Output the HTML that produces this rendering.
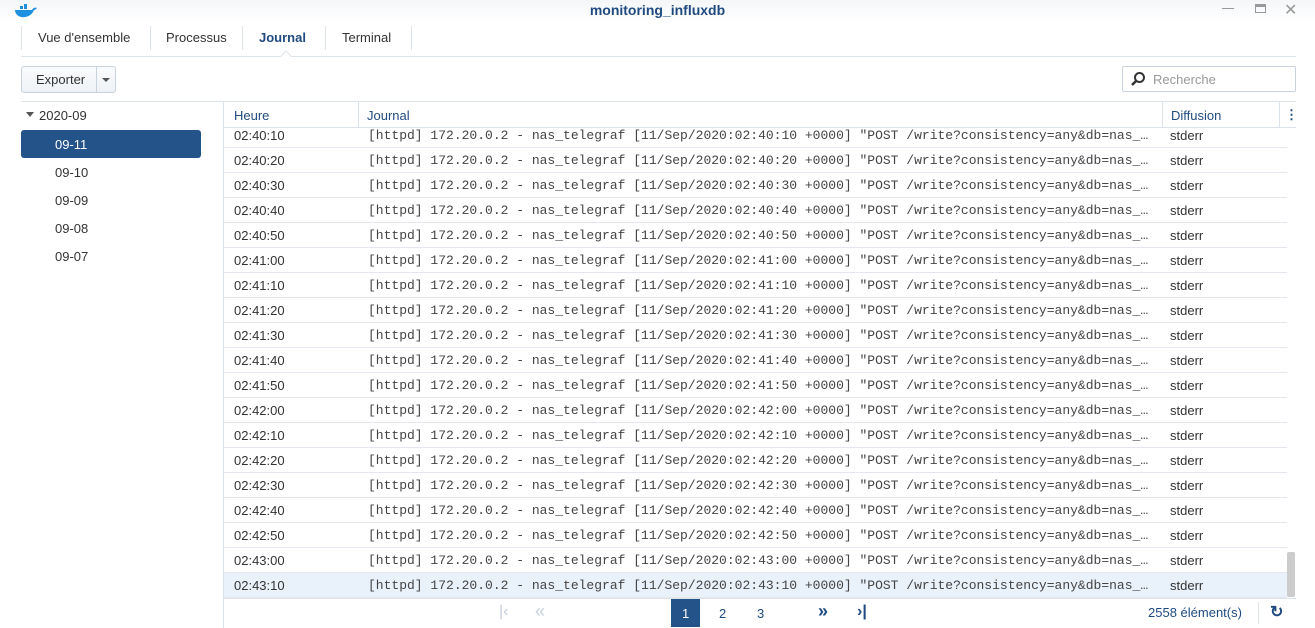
<!DOCTYPE html><html><head><style>
*{margin:0;padding:0;box-sizing:border-box}
body{width:1315px;height:628px;overflow:hidden;background:#fff;font-family:"Liberation Sans",sans-serif;font-size:13px;color:#333;position:relative}
.abs{position:absolute}
.title{left:0;top:0;width:1315px;height:22px;background:linear-gradient(#f4f6f8,#fff)}
.title .t{left:0;width:1315px;text-align:center;top:2px;font-weight:bold;font-size:14px;color:#1f4a80}
.tab{top:30px;font-size:13px;color:#333}
.sep{width:1px;height:24px;background:#dde3ea;top:26px}
.r{position:absolute;left:0;width:1063px;height:25px;border-bottom:1px solid #e4e8ee}
.r span{position:absolute;top:5px}
.r .h{left:10px}
.r .m{font-family:"Liberation Mono",monospace;font-size:13px;color:#444;left:144px;top:5px;white-space:pre}
.r .d{left:946px}
.hdr{color:#1f4a80}
.ld{left:55px;color:#333}
</style></head><body>
<div class="abs title"><div class="abs t">monitoring_influxdb</div></div>
<svg class="abs" style="left:14px;top:4px" width="24" height="14" viewBox="0 0 24 14"><path d="M1 6h17c1-2 3-3 5-2-1 1-2 2-3 2-2 5-7 8-13 7C3 12 1 9 1 6z" fill="#1e90e0"/><rect x="6" y="2" width="3" height="3" fill="#1e90e0"/><rect x="10" y="2" width="3" height="3" fill="#1e90e0"/><rect x="10" y="0" width="3" height="2" fill="#1e90e0"/></svg>
<div class="abs" style="left:1222px;top:8px;width:12px;height:1px;background:#999"></div>
<div class="abs" style="left:1255px;top:4px;width:11px;height:9px;border:1px solid #999;border-top-width:3px"></div>
<div class="abs" style="left:1284px;top:0px;color:#999;font-size:16px">✕</div>
<div class="abs" style="left:21px;top:56px;width:1275px;height:1px;background:#dde3ea"></div>
<div class="abs" style="left:21px;top:26px;width:1px;height:24px;background:#dde3ea"></div>
<div class="abs tab" style="left:38px">Vue d'ensemble</div>
<div class="abs sep" style="left:150px"></div>
<div class="abs tab" style="left:166px">Processus</div>
<div class="abs sep" style="left:242px"></div>
<div class="abs tab" style="left:259px;font-weight:bold;color:#1f4a80">Journal</div>
<div class="abs sep" style="left:325px"></div>
<div class="abs tab" style="left:342px">Terminal</div>
<div class="abs sep" style="left:411px"></div>
<div class="abs" style="left:282px;top:52px;width:8px;height:8px;background:#fff;border-left:1px solid #dde3ea;border-top:1px solid #dde3ea;transform:rotate(45deg)"></div>
<div class="abs" style="left:21px;top:66px;width:95px;height:27px;border:1px solid #c9d3de;border-radius:3px;background:linear-gradient(#fafbfc,#eef2f6)"></div>
<div class="abs" style="left:36px;top:72px">Exporter</div>
<div class="abs" style="left:96px;top:66px;width:1px;height:27px;background:#c9d3de"></div>
<div class="abs" style="left:102px;top:78px;border-left:4px solid transparent;border-right:4px solid transparent;border-top:4px solid #555"></div>
<div class="abs" style="left:1122px;top:66px;width:174px;height:26px;border:1px solid #c9d3de;border-radius:2px"></div>
<svg class="abs" style="left:1130px;top:71px" width="16" height="16" viewBox="0 0 16 16"><circle cx="9.5" cy="6.5" r="4.5" fill="none" stroke="#333" stroke-width="2"/><path d="M6 10l-4 4" stroke="#333" stroke-width="2.5"/></svg>
<div class="abs" style="left:1153px;top:72px;color:#999">Recherche</div>
<div class="abs" style="left:21px;top:101px;width:1275px;height:1px;background:#dde3ea"></div>
<div class="abs" style="left:26px;top:112px;border-left:4px solid transparent;border-right:4px solid transparent;border-top:5px solid #555"></div>
<div class="abs" style="left:39px;top:108px">2020-09</div>
<div class="abs" style="left:21px;top:130px;width:180px;height:28px;background:#24538a;border-radius:3px"></div>
<div class="abs" style="left:55px;top:137px;color:#fff">09-11</div>
<div class="abs ld" style="top:165px">09-10</div>
<div class="abs ld" style="top:193px">09-09</div>
<div class="abs ld" style="top:221px">09-08</div>
<div class="abs ld" style="top:249px">09-07</div>
<div class="abs" style="left:223px;top:102px;width:1px;height:526px;background:#dde3ea"></div>
<div class="abs" style="left:224px;top:128px;width:1063px;height:470px;overflow:hidden">
<div class="r" style="top:-5px"><span class="h">02:40:10</span><span class="m">[httpd] 172.20.0.2 - nas_telegraf [11/Sep/2020:02:40:10 +0000] "POST /write?consistency=any&amp;db=nas_…</span><span class="d">stderr</span></div>
<div class="r" style="top:20px"><span class="h">02:40:20</span><span class="m">[httpd] 172.20.0.2 - nas_telegraf [11/Sep/2020:02:40:20 +0000] "POST /write?consistency=any&amp;db=nas_…</span><span class="d">stderr</span></div>
<div class="r" style="top:45px"><span class="h">02:40:30</span><span class="m">[httpd] 172.20.0.2 - nas_telegraf [11/Sep/2020:02:40:30 +0000] "POST /write?consistency=any&amp;db=nas_…</span><span class="d">stderr</span></div>
<div class="r" style="top:70px"><span class="h">02:40:40</span><span class="m">[httpd] 172.20.0.2 - nas_telegraf [11/Sep/2020:02:40:40 +0000] "POST /write?consistency=any&amp;db=nas_…</span><span class="d">stderr</span></div>
<div class="r" style="top:95px"><span class="h">02:40:50</span><span class="m">[httpd] 172.20.0.2 - nas_telegraf [11/Sep/2020:02:40:50 +0000] "POST /write?consistency=any&amp;db=nas_…</span><span class="d">stderr</span></div>
<div class="r" style="top:120px"><span class="h">02:41:00</span><span class="m">[httpd] 172.20.0.2 - nas_telegraf [11/Sep/2020:02:41:00 +0000] "POST /write?consistency=any&amp;db=nas_…</span><span class="d">stderr</span></div>
<div class="r" style="top:145px"><span class="h">02:41:10</span><span class="m">[httpd] 172.20.0.2 - nas_telegraf [11/Sep/2020:02:41:10 +0000] "POST /write?consistency=any&amp;db=nas_…</span><span class="d">stderr</span></div>
<div class="r" style="top:170px"><span class="h">02:41:20</span><span class="m">[httpd] 172.20.0.2 - nas_telegraf [11/Sep/2020:02:41:20 +0000] "POST /write?consistency=any&amp;db=nas_…</span><span class="d">stderr</span></div>
<div class="r" style="top:195px"><span class="h">02:41:30</span><span class="m">[httpd] 172.20.0.2 - nas_telegraf [11/Sep/2020:02:41:30 +0000] "POST /write?consistency=any&amp;db=nas_…</span><span class="d">stderr</span></div>
<div class="r" style="top:220px"><span class="h">02:41:40</span><span class="m">[httpd] 172.20.0.2 - nas_telegraf [11/Sep/2020:02:41:40 +0000] "POST /write?consistency=any&amp;db=nas_…</span><span class="d">stderr</span></div>
<div class="r" style="top:245px"><span class="h">02:41:50</span><span class="m">[httpd] 172.20.0.2 - nas_telegraf [11/Sep/2020:02:41:50 +0000] "POST /write?consistency=any&amp;db=nas_…</span><span class="d">stderr</span></div>
<div class="r" style="top:270px"><span class="h">02:42:00</span><span class="m">[httpd] 172.20.0.2 - nas_telegraf [11/Sep/2020:02:42:00 +0000] "POST /write?consistency=any&amp;db=nas_…</span><span class="d">stderr</span></div>
<div class="r" style="top:295px"><span class="h">02:42:10</span><span class="m">[httpd] 172.20.0.2 - nas_telegraf [11/Sep/2020:02:42:10 +0000] "POST /write?consistency=any&amp;db=nas_…</span><span class="d">stderr</span></div>
<div class="r" style="top:320px"><span class="h">02:42:20</span><span class="m">[httpd] 172.20.0.2 - nas_telegraf [11/Sep/2020:02:42:20 +0000] "POST /write?consistency=any&amp;db=nas_…</span><span class="d">stderr</span></div>
<div class="r" style="top:345px"><span class="h">02:42:30</span><span class="m">[httpd] 172.20.0.2 - nas_telegraf [11/Sep/2020:02:42:30 +0000] "POST /write?consistency=any&amp;db=nas_…</span><span class="d">stderr</span></div>
<div class="r" style="top:370px"><span class="h">02:42:40</span><span class="m">[httpd] 172.20.0.2 - nas_telegraf [11/Sep/2020:02:42:40 +0000] "POST /write?consistency=any&amp;db=nas_…</span><span class="d">stderr</span></div>
<div class="r" style="top:395px"><span class="h">02:42:50</span><span class="m">[httpd] 172.20.0.2 - nas_telegraf [11/Sep/2020:02:42:50 +0000] "POST /write?consistency=any&amp;db=nas_…</span><span class="d">stderr</span></div>
<div class="r" style="top:420px"><span class="h">02:43:00</span><span class="m">[httpd] 172.20.0.2 - nas_telegraf [11/Sep/2020:02:43:00 +0000] "POST /write?consistency=any&amp;db=nas_…</span><span class="d">stderr</span></div>
<div class="r" style="top:445px;background:#e9f1fb"><span class="h">02:43:10</span><span class="m">[httpd] 172.20.0.2 - nas_telegraf [11/Sep/2020:02:43:10 +0000] "POST /write?consistency=any&amp;db=nas_…</span><span class="d">stderr</span></div>
</div>
<div class="abs" style="left:224px;top:102px;width:1072px;height:26px;border-bottom:1px solid #dde3ea;background:#fff"></div>
<div class="abs hdr" style="left:234px;top:108px">Heure</div>
<div class="abs" style="left:358px;top:102px;width:1px;height:26px;background:#dde3ea"></div>
<div class="abs hdr" style="left:367px;top:108px">Journal</div>
<div class="abs" style="left:1162px;top:102px;width:1px;height:26px;background:#dde3ea"></div>
<div class="abs hdr" style="left:1171px;top:108px">Diffusion</div>
<div class="abs" style="left:1279px;top:102px;width:1px;height:26px;background:#dde3ea"></div>
<div class="abs hdr" style="left:1285px;top:107px;font-weight:bold">⋮</div>
<div class="abs" style="left:1287px;top:552px;width:8px;height:45px;background:#ccc;border-radius:2px"></div>
<div class="abs" style="left:224px;top:598px;width:1072px;height:1px;background:#dde3ea"></div>
<div class="abs" style="left:499px;top:603px;color:#c5cfdb;font-size:16px">|&lsaquo;</div>
<div class="abs" style="left:535px;top:601px;color:#c5cfdb;font-size:18px">«</div>
<div class="abs" style="left:671px;top:599px;width:29px;height:28px;background:#24538a"></div>
<div class="abs" style="left:682px;top:606px;color:#fff">1</div>
<div class="abs" style="left:719px;top:606px;color:#1f4a80">2</div>
<div class="abs" style="left:757px;top:606px;color:#1f4a80">3</div>
<div class="abs" style="left:818px;top:601px;color:#1f4a80;font-size:18px;font-weight:bold">»</div>
<div class="abs" style="left:857px;top:603px;color:#1f4a80;font-size:16px;font-weight:bold">&rsaquo;|</div>
<div class="abs" style="left:1148px;top:605px;color:#1f4a80">2558 élément(s)</div>
<div class="abs" style="left:1258px;top:602px;width:1px;height:22px;background:#dde3ea"></div>
<div class="abs" style="left:1270px;top:602px;color:#1f4a80;font-size:16px;font-weight:bold">↻</div>
</body></html>
